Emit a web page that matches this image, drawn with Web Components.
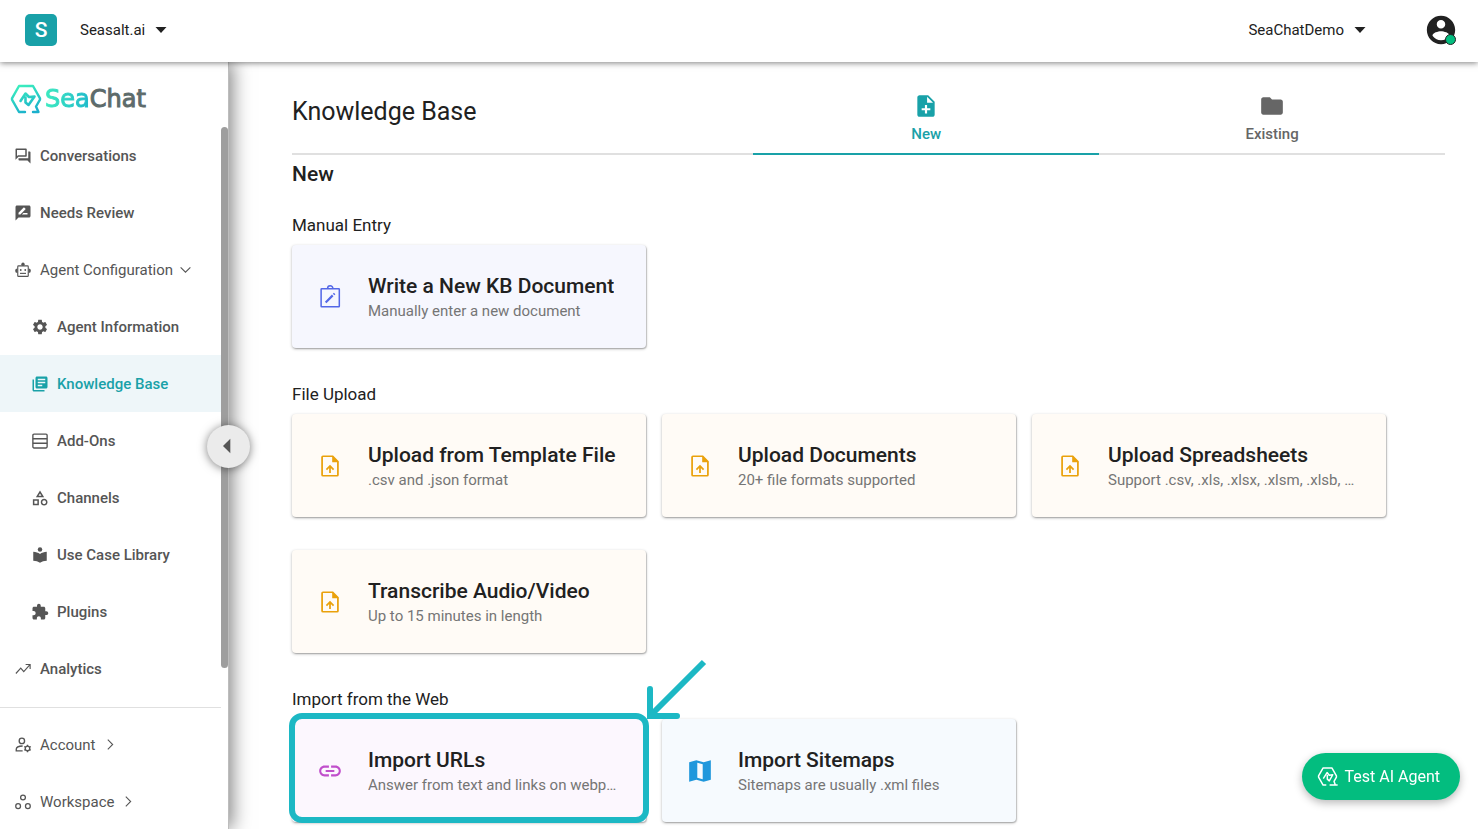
<!DOCTYPE html>
<html lang="en">
<head>
<meta charset="utf-8">
<meta name="viewport" content="width=device-width, initial-scale=1">
<title>SeaChat – Knowledge Base</title>
<style>
  html, body { margin: 0; height: 100%; }
  body {
    font-family: Roboto, "Liberation Sans", sans-serif;
    font-size: 15px;
    color: #212121;
    background: #fff;
    --teal: #19a1a8;
    --grey: #555;
    --green: #03bd7f;
  }
</style>
</head>
<body>
<app-shell>
  <top-bar slot="top" initial="S" company="Seasalt.ai" workspace="SeaChatDemo"></top-bar>
  <side-nav slot="side">
    <nav-item icon="chat">Conversations</nav-item>
    <nav-item icon="review">Needs Review</nav-item>
    <nav-item icon="robot" group="down">Agent Configuration</nav-item>
    <nav-item icon="gear" child>Agent Information</nav-item>
    <nav-item icon="library" child active>Knowledge Base</nav-item>
    <nav-item icon="rows" child>Add-Ons</nav-item>
    <nav-item icon="category" child>Channels</nav-item>
    <nav-item icon="reader" child>Use Case Library</nav-item>
    <nav-item icon="puzzle" child>Plugins</nav-item>
    <nav-item icon="trend">Analytics</nav-item>
    <nav-item slot="more" icon="account" group="right">Account</nav-item>
    <nav-item slot="more" icon="workspace" group="right">Workspace</nav-item>
  </side-nav>
  <page-head heading="Knowledge Base">
    <page-tab icon="noteadd" selected>New</page-tab>
    <page-tab icon="folder">Existing</page-tab>
  </page-head>
  <source-list heading="New">
    <source-group label="Manual Entry">
      <source-card icon="clipboard" tone="indigo" heading="Write a New KB Document">Manually enter a new document</source-card>
    </source-group>
    <source-group label="File Upload">
      <source-card icon="upload" tone="amber" heading="Upload from Template File">.csv and .json format</source-card>
      <source-card icon="upload" tone="amber" heading="Upload Documents">20+ file formats supported</source-card>
      <source-card icon="upload" tone="amber" heading="Upload Spreadsheets">Support .csv, .xls, .xlsx, .xlsm, .xlsb, …</source-card>
      <source-card icon="upload" tone="amber" heading="Transcribe Audio/Video">Up to 15 minutes in length</source-card>
    </source-group>
    <source-group label="Import from the Web">
      <source-card icon="link" tone="violet" heading="Import URLs" marked>Answer from text and links on webp…</source-card>
      <source-card icon="map" tone="blue" heading="Import Sitemaps">Sitemaps are usually .xml files</source-card>
    </source-group>
  </source-list>
  <test-button slot="float">Test AI Agent</test-button>
</app-shell>

<script>
const stroke = (d, w = 1.6) => `<g fill="none" stroke="currentColor" stroke-width="${w}">${d}</g>`;
const ICONS = {
  chat: '<path d="M15 4v7H5.17L4 12.17V4h11m1-2H3c-.55 0-1 .45-1 1v14l4-4h10c.55 0 1-.45 1-1V3c0-.55-.45-1-1-1m5 4h-2v9H6v2c0 .55.45 1 1 1h11l4 4V7c0-.55-.45-1-1-1"/>',
  review: '<path d="M20 2H4c-1.1 0-1.99.9-1.99 2L2 22l4-4h14c1.1 0 2-.9 2-2V4c0-1.1-.9-2-2-2zM6 14v-2.47l6.88-6.88c.2-.2.51-.2.71 0l1.77 1.77c.2.2.2.51 0 .71L8.47 14H6zm12 0h-7.5l2-2H18v2z"/>',
  robot: stroke('<rect x="5" y="6.500" width="14" height="14" rx="1"/><path d="M8 16.500h8"/>', 1.500) + '<circle cx="12" cy="4.300" r="2.200"/><circle cx="9" cy="12" r="1.200"/><circle cx="15" cy="12" r="1.200"/><path d="M4.500 10a3 3 0 0 0 0 6zM19.500 10a3 3 0 0 1 0 6z"/>',
  gear: '<path d="M19.14 12.94c.04-.3.06-.61.06-.94 0-.32-.02-.64-.07-.94l2.03-1.58c.18-.14.23-.41.12-.61l-1.92-3.32c-.12-.22-.37-.29-.59-.22l-2.39.96c-.5-.38-1.03-.7-1.62-.94l-.36-2.54c-.04-.24-.24-.41-.48-.41h-3.84c-.24 0-.43.17-.47.41l-.36 2.54c-.59.24-1.13.57-1.62.94l-2.39-.96c-.22-.08-.47 0-.59.22L2.74 8.87c-.12.21-.08.47.12.61l2.03 1.58c-.05.3-.09.63-.09.94s.02.64.07.94l-2.03 1.58c-.18.14-.23.41-.12.61l1.92 3.32c.12.22.37.29.59.22l2.39-.96c.5.38 1.03.7 1.62.94l.36 2.54c.05.24.24.41.48.41h3.84c.24 0 .44-.17.47-.41l.36-2.54c.59-.24 1.13-.56 1.62-.94l2.39.96c.22.08.47 0 .59-.22l1.92-3.32c.12-.22.07-.47-.12-.61zM12 15.600c-1.980 0-3.600-1.620-3.600-3.600s1.620-3.600 3.600-3.600 3.600 1.620 3.600 3.600-1.620 3.600-3.600 3.600z"/>',
  library: '<path d="M4 6H2v14c0 1.100.9 2 2 2h14v-2H4zm16-4H8c-1.100 0-2 .9-2 2v12c0 1.100.9 2 2 2h12c1.100 0 2-.9 2-2V4c0-1.100-.9-2-2-2m-1 9H9V9h10zm-4 4H9v-2h6zm4-8H9V5h10z"/>',
  rows: stroke('<rect x="2.500" y="2.800" width="19" height="18.500" rx="1.500"/><path d="M2.500 9h19M2.500 15h19"/>', 1.800),
  category: '<path d="m12 2-5.500 9h11zm0 3.840L13.930 9h-3.870zM17.500 13c-2.490 0-4.500 2.010-4.500 4.500s2.010 4.500 4.500 4.500 4.500-2.010 4.500-4.500-2.010-4.500-4.500-4.500m0 7c-1.380 0-2.500-1.120-2.500-2.500s1.120-2.500 2.500-2.500 2.500 1.120 2.500 2.500-1.120 2.500-2.500 2.500M2.500 21.500h8v-8h-8zm2-6h4v4h-4z"/>',
  reader: '<path d="M12 10.500C9.500 8.800 6.500 7.500 3 7.500v12c3.500 0 6.500 1 9 2.700 2.500-1.700 5.500-2.700 9-2.700v-12c-3.500 0-6.500 1.300-9 3z"/><circle cx="12" cy="4.500" r="3"/>',
  puzzle: '<path d="M20.500 11H19V7c0-1.100-.9-2-2-2h-4V3.500C13 2.120 11.880 1 10.500 1S8 2.120 8 3.500V5H4c-1.100 0-1.990.9-1.990 2v3.800H3.500c1.490 0 2.700 1.210 2.700 2.700s-1.210 2.700-2.700 2.700H2V20c0 1.100.9 2 2 2h3.800v-1.500c0-1.490 1.210-2.700 2.700-2.700 1.490 0 2.700 1.210 2.700 2.700V22H17c1.100 0 2-.9 2-2v-4h1.500c1.380 0 2.500-1.120 2.500-2.500S21.880 11 20.500 11z"/>',
  trend: stroke('<path d="M2.500 18 9 10.800l4 4.700 8-9M15.500 6H21.500v6"/>', 1.500),
  account: stroke('<circle cx="10.500" cy="6.500" r="3.600"/><path d="M11.500 19.800H3v-2.300c0-2 3.500-4 8.500-4.200"/><circle cx="18" cy="16.500" r="3"/><path d="M18 13.500v-2M18 19.500v2M20.600 15l1.800-1M15.400 18l-1.800 1M20.600 18l1.800 1M15.400 15l-1.800-1"/>', 1.800),
  workspace: stroke('<circle cx="12" cy="6" r="3.200"/><circle cx="5.500" cy="17.500" r="3.200"/><circle cx="18.500" cy="17.500" r="3.200"/>', 1.700),
  down: stroke('<path d="m3 8 9 9 9-9"/>', 2),
  right: stroke('<path d="m7 3 9 9-9 9"/>', 2),
  caret: '<path d="M1 6h22L12 18z"/>',
  collapse: '<path d="M14 1v22L3 12z"/>',
  noteadd: '<path d="M14 2H6c-1.100 0-1.990.9-1.990 2L4 20c0 1.100.890 2 1.990 2H18c1.100 0 2-.9 2-2V8l-6-6zm2 14h-3v3h-2v-3H8v-2h3v-3h2v3h3v2zm-3-7V3.500L18.500 9H13z"/>',
  folder: '<path d="M10 4H4c-1.100 0-1.990.9-1.990 2L2 18c0 1.100.9 2 2 2h16c1.100 0 2-.9 2-2V8c0-1.100-.9-2-2-2h-8l-2-2z"/>',
  person: '<path d="M12 2C6.480 2 2 6.480 2 12s4.480 10 10 10 10-4.480 10-10S17.520 2 12 2zm0 3c1.660 0 3 1.340 3 3s-1.340 3-3 3-3-1.340-3-3 1.340-3 3-3zm0 14.200c-2.500 0-4.710-1.280-6-3.220.030-1.990 4-3.080 6-3.080 1.990 0 5.970 1.090 6 3.080-1.290 1.940-3.500 3.220-6 3.220z"/>',
  clipboard: stroke('<rect x="3.800" y="4.300" width="16.800" height="16.800" rx=".5"/><path d="M9.800 4a2.400 2.400 0 0 1 4.800 0"/>', 1.400) + stroke('<path d="m8 17 6.500-6.500M15.300 9.700l1-1"/>', 2),
  upload: stroke('<path d="M14.500 3H5.500a.8.8 0 0 0-.8.8v16.400c0 .4.300.8.8.8h13c.5 0 .8-.4.800-.8V8z"/><path d="M12 18.500v-6M8.700 15.300 12 12l3.300 3.300"/>', 1.600) + '<path d="M14 2.500V8.500H20z"/>',
  link: '<path d="M3.900 12c0-1.710 1.390-3.100 3.100-3.100h4V7H7c-2.760 0-5 2.240-5 5s2.240 5 5 5h4v-1.900H7c-1.710 0-3.100-1.390-3.100-3.100zM8 13h8v-2H8v2zm9-6h-4v1.900h4c1.710 0 3.100 1.390 3.100 3.100s-1.390 3.100-3.100 3.100h-4V17h4c2.760 0 5-2.240 5-5s-2.240-5-5-5z"/>',
  map: '<path fill-rule="evenodd" d="M2 4 8.600 2l6.800 2L22 2v18l-6.600 2-6.800-2L2 22zM9.500 4.300v13.900l5 1.500V5.800z"/>',
  seachat: stroke('<path d="M10 21.800H7L1.800 12.600V11.400L7 2.200H17l5.200 9.200v1.200l-2.700 5 1.500 4.200h-6M15.800 21.800H23" stroke-linecap="round" stroke-linejoin="round"/><path d="m7.500 13.800 4-6.300 2.500 3 4-.5L14 17l-2.200-2v-4.200" stroke-linejoin="round" stroke-linecap="round"/>', 1.700)
};

const define = (name, render) => customElements.define(name, class extends HTMLElement {
  constructor() { super(); this.attachShadow({ mode: 'open' }); }
  connectedCallback() {
    const t = document.createElement('template');
    t.innerHTML = `<style>*{box-sizing:border-box}button{font:inherit;color:inherit;border:0;background:none;padding:0;margin:0;cursor:pointer}a{color:inherit;text-decoration:none}h1,h2,h3,p{margin:0}</style>` + render(this);
    this.shadowRoot.replaceChildren(t.content.cloneNode(true));
  }
});
const at = (el, n) => el.getAttribute(n) || '';

define('ui-icon', el => `
  <style>:host{display:block;flex:none;width:18px;height:18px}svg{display:block;width:100%;height:100%}</style>
  <svg viewBox="0 0 24 24" fill="currentColor" aria-hidden="true">${ICONS[at(el, 'name')]}</svg>`);

define('app-shell', () => `
  <style>
    :host{display:grid;grid-template:62px minmax(0,1fr) / 229px minmax(0,1fr);height:100vh;overflow:hidden}
    .top{grid-column:1/-1;z-index:3}
    .side{z-index:2;min-height:0}
    main{padding:0 33px 0 63px;overflow:hidden}
  </style>
  <div class="top"><slot name="top"></slot></div>
  <div class="side"><slot name="side"></slot></div>
  <main><slot></slot></main>
  <slot name="float"></slot>`);

define('top-bar', el => `
  <style>
    :host{display:block;height:100%}
    header{display:flex;align-items:center;height:100%;padding:0 20px 3px 25px;background:#fff;box-shadow:0 1px 6px rgba(0,0,0,.5)}
    .logo{display:grid;place-items:center;width:32px;height:32px;margin-right:23px;border-radius:5px;background:var(--teal);color:#fff;font-size:21px;font-weight:500}
    .pick{display:flex;align-items:center;gap:10px;line-height:20px}
    .pick ui-icon{width:12px;height:12px}
    .space{margin-left:auto;margin-right:58px}
    .me{position:relative}
    .me ui-icon{width:34px;height:34px}
    .dot{position:absolute;right:2px;bottom:2px;width:11px;height:11px;border:1px solid #212121;border-radius:50%;background:var(--green)}
  </style>
  <header>
    <span class="logo">${at(el, 'initial')}</span>
    <button class="pick">${at(el, 'company')}<ui-icon name="caret"></ui-icon></button>
    <button class="pick space">${at(el, 'workspace')}<ui-icon name="caret"></ui-icon></button>
    <button class="me" aria-label="My account"><ui-icon name="person"></ui-icon><span class="dot"></span></button>
  </header>`);

define('brand-logo', () => `
  <style>
    :host{display:flex;align-items:center;gap:3px;height:65px;padding:8px 0 0 10px}
    svg{width:32px;height:30px}
    span{font:24px/30px "DejaVu Sans",sans-serif;color:#5d6b6b;-webkit-text-stroke:1px #5d6b6b}
    b{font-weight:400;color:transparent;-webkit-text-stroke-color:transparent;background:linear-gradient(90deg,#3ceabf,#1db9cb);background-clip:text;-webkit-background-clip:text}
  </style>
  <svg viewBox="0 0 32 30" fill="none" stroke="url(#g)" stroke-width="2.4" stroke-linecap="round" stroke-linejoin="round" aria-hidden="true">
    <defs><linearGradient id="g" x1="8" y1="1" x2="18" y2="29" gradientUnits="userSpaceOnUse"><stop stop-color="#3cf0bd"/><stop offset="1" stop-color="#1bb0cc"/></linearGradient></defs>
    <path d="M15 28H9L2 15.600V14.400L9 2H23l7 12.400v1.200L26 22.500 28.500 28H23"/>
    <path d="m10.500 17 5-7.500 3.500 3.500 5.500-.5L18.500 21l-3-2.500v-5" stroke-width="2.600"/>
  </svg>
  <span><b>Sea</b>Chat</span>`);

define('side-nav', () => `
  <style>
    :host{position:relative;display:flex;flex-direction:column;height:100%;background:#fff;border-right:1px solid #bdbdbd;box-shadow:3px 0 18px rgba(0,0,0,.5)}
    .body{display:grid;grid-template-columns:minmax(0,1fr) 7px;flex:1;min-height:0}
    nav{overflow:hidden}
    hr{margin:10px 0 8px;border:0;border-top:1px solid #e0e0e0}
    .thumb{height:77%;border-radius:4px;background:#9e9e9e}
    .fold{position:absolute;top:50%;right:-22px;display:grid;place-items:center;width:43px;height:43px;margin-top:-21px;border-radius:50%;background:#ebebeb;color:var(--grey);box-shadow:0 1px 10px rgba(0,0,0,.5)}
    .fold ui-icon{width:16px;height:16px}
  </style>
  <brand-logo></brand-logo>
  <div class="body">
    <nav><slot></slot><hr><slot name="more"></slot></nav>
    <div class="thumb"></div>
  </div>
  <button class="fold" aria-label="Collapse menu"><ui-icon name="collapse"></ui-icon></button>`);

define('nav-item', el => `
  <style>
    :host{display:block;color:var(--grey)}
    a{display:flex;align-items:center;gap:8px;height:57px;padding-left:14px;font-weight:500}
    :host([child]) a{padding-left:31px}
    :host([group]) a{font-weight:400}
    :host([active]) a{color:var(--teal);background:#eef6f9}
    .arrow{width:13px;height:13px}
    :host([group="down"]) .arrow{margin-left:-2px}
  </style>
  <a href="#"><ui-icon name="${at(el, 'icon')}"></ui-icon><slot></slot>${at(el, 'group') ? `<ui-icon class="arrow" name="${at(el, 'group')}"></ui-icon>` : ''}</a>`);

define('page-head', el => `
  <style>
    :host{display:grid;grid-template-columns:4fr 3fr 3fr;height:93px;box-shadow:inset 0 -2px #e0e0e0}
    h1{padding-top:34px;font-size:25px;line-height:32px;font-weight:400}
  </style>
  <h1>${at(el, 'heading')}</h1><slot></slot>`);

define('page-tab', el => `
  <style>
    :host{display:block;color:#666}
    button{display:flex;flex-direction:column;align-items:center;gap:5px;width:100%;height:100%;padding-top:31px;border-bottom:2px solid transparent;font-size:15px;line-height:20px;font-weight:500}
    :host([selected]) button{color:var(--teal);border-color:var(--teal)}
    ui-icon{width:26px;height:26px}
  </style>
  <button role="tab" aria-selected="${el.hasAttribute('selected')}"><ui-icon name="${at(el, 'icon')}"></ui-icon><slot></slot></button>`);

define('source-list', el => `
  <style>
    :host{display:flex;flex-direction:column;gap:34px;padding-top:5px;max-width:1094px}
    h2{font-size:21px;line-height:28px;font-weight:500;margin-bottom:-9px}
  </style>
  <h2>${at(el, 'heading')}</h2><slot></slot>`);

define('source-group', el => `
  <style>
    :host{display:block}
    h3{font-size:17px;line-height:24px;font-weight:400;margin-bottom:8px}
    div{display:grid;grid-template-columns:repeat(3,minmax(0,1fr));gap:33px 16px}
  </style>
  <h3>${at(el, 'label')}</h3><div><slot></slot></div>`);

const TONES = { indigo: ['#5468e7', '#f6f7fe'], amber: ['#eaa10b', '#fffbf6'], violet: ['#c04fcb', '#fcf7fe'], blue: ['#1f97dc', '#f6fafe'] };
define('source-card', el => {
  const [ink, paper] = TONES[at(el, 'tone')];
  return `
  <style>
    :host{position:relative;display:block}
    :host([marked]){z-index:1}
    button{display:flex;align-items:center;gap:25px;width:100%;height:103px;padding:0 22px 0 25px;border-radius:4px;background:${paper};text-align:left;box-shadow:0 1px 3px rgba(0,0,0,.3),1px 1px 1px rgba(0,0,0,.15)}
    ui-icon{width:26px;height:26px;color:${ink}}
    .text{min-width:0}
    .title,.note{display:block;white-space:nowrap;overflow:hidden;text-overflow:ellipsis}
    .title{font-size:21px;line-height:28px;font-weight:500}
    .note{font-size:15px;line-height:22px;color:#757575}
    .ring{position:absolute;inset:-6px -3px -1px;border:6px solid #1cb8c4;border-radius:13px;pointer-events:none}
    .arrow{position:absolute;left:354px;bottom:100px;width:64px;height:64px;pointer-events:none}
  </style>
  <button><ui-icon name="${at(el, 'icon')}"></ui-icon><span class="text"><span class="title">${at(el, 'heading')}</span><span class="note"><slot></slot></span></span></button>
  ${el.hasAttribute('marked') ? `<span class="ring"></span>
  <svg class="arrow" viewBox="0 0 64 64" fill="none" stroke="#1cb8c4" stroke-width="6" aria-hidden="true"><path d="M58 4 5 57"/><path d="M4 31v27h27" stroke-linecap="round"/></svg>` : ''}`;
});

define('test-button', () => `
  <style>
    :host{position:fixed;right:18px;bottom:29px;z-index:4}
    button{display:flex;align-items:center;gap:7px;height:47px;padding:0 20px 0 15px;border-radius:24px;background:var(--green);color:#fff;font-size:16px;line-height:20px;box-shadow:0 3px 8px rgba(0,0,0,.28)}
    ui-icon{width:21px;height:21px}
  </style>
  <button><ui-icon name="seachat"></ui-icon><slot></slot></button>`);
</script>
</body>
</html>
